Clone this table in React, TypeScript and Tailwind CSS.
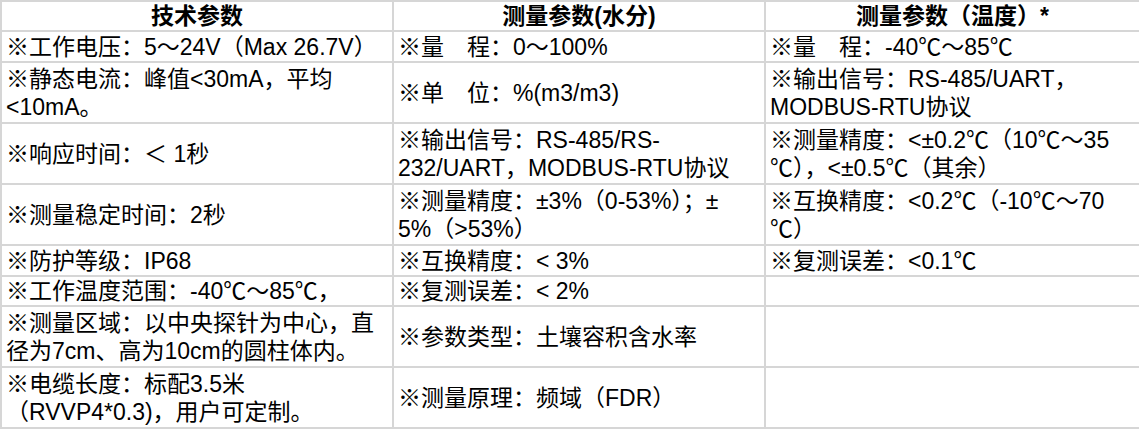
import React from "react";

type Row = { h: string; cells: React.ReactNode[][] };

const rows: Row[] = [
  { h: "h-[31px]", cells: [["※工作电压：5～24V（Max 26.7V）"], ["※量　程：0～100%"], ["※量　程：-40℃～85℃"]] },
  { h: "h-[61px]", cells: [["※静态电流：峰值<30mA，平均", "<10mA。"], ["※单　位：%(m3/m3)"], ["※输出信号：RS-485/UART，", "MODBUS-RTU协议"]] },
  { h: "h-[61px]", cells: [["※响应时间：＜ 1秒"], ["※输出信号：RS-485/RS-", "232/UART，MODBUS-RTU协议"], ["※测量精度：<±0.2℃（10℃～35", "℃），<±0.5℃（其余）"]] },
  { h: "h-[61px]", cells: [["※测量稳定时间：2秒"], ["※测量精度：±3%（0-53%）；±", "5%（>53%）"], ["※互换精度：<0.2℃（-10℃～70", "℃）"]] },
  { h: "h-[31px]", cells: [["※防护等级：IP68"], ["※互换精度：< 3%"], ["※复测误差：<0.1℃"]] },
  { h: "h-[30px]", cells: [["※工作温度范围：-40℃～85℃，"], ["※复测误差：< 2%"], []] },
  { h: "h-[61px]", cells: [["※测量区域：以中央探针为中心，直", "径为7cm、高为10cm的圆柱体内。"], ["※参数类型：土壤容积含水率"], []] },
  { h: "h-[61px]", cells: [["※电缆长度：标配3.5米", "（RVVP4*0.3)，用户可定制。"], ["※测量原理：频域（FDR）"], []] },
];

const headers = ["技术参数", "测量参数(水分)", "测量参数（温度）*"];

export default function App() {
  return (
    <div className="w-[1139px] h-[429px] bg-white overflow-hidden">
      <table
        className="table-fixed border-collapse w-[1139px] text-[23px] leading-[28px] text-black"
        style={{ fontFamily: '"Liberation Sans", "Noto Sans CJK SC", sans-serif' }}
      >
        <colgroup>
          <col className="w-[392px]" />
          <col className="w-[372px]" />
          <col className="w-[375px]" />
        </colgroup>
        <thead>
          <tr className="h-[30px]">
            {headers.map((t) => (
              <th key={t} className="border-2 border-[#d6d6d6] px-[4px] py-0 text-center font-bold align-middle whitespace-nowrap leading-[26px]">
                {t}
              </th>
            ))}
          </tr>
        </thead>
        <tbody>
          {rows.map((r, i) => (
            <tr key={i} className={r.h}>
              {r.cells.map((lines, j) => (
                <td key={j} className="border-2 border-[#d6d6d6] px-[4px] py-0 text-left align-middle">
                  {lines.map((l, k) => (
                    <div key={k} className="whitespace-nowrap">{l}</div>
                  ))}
                </td>
              ))}
            </tr>
          ))}
        </tbody>
      </table>
    </div>
  );
}
